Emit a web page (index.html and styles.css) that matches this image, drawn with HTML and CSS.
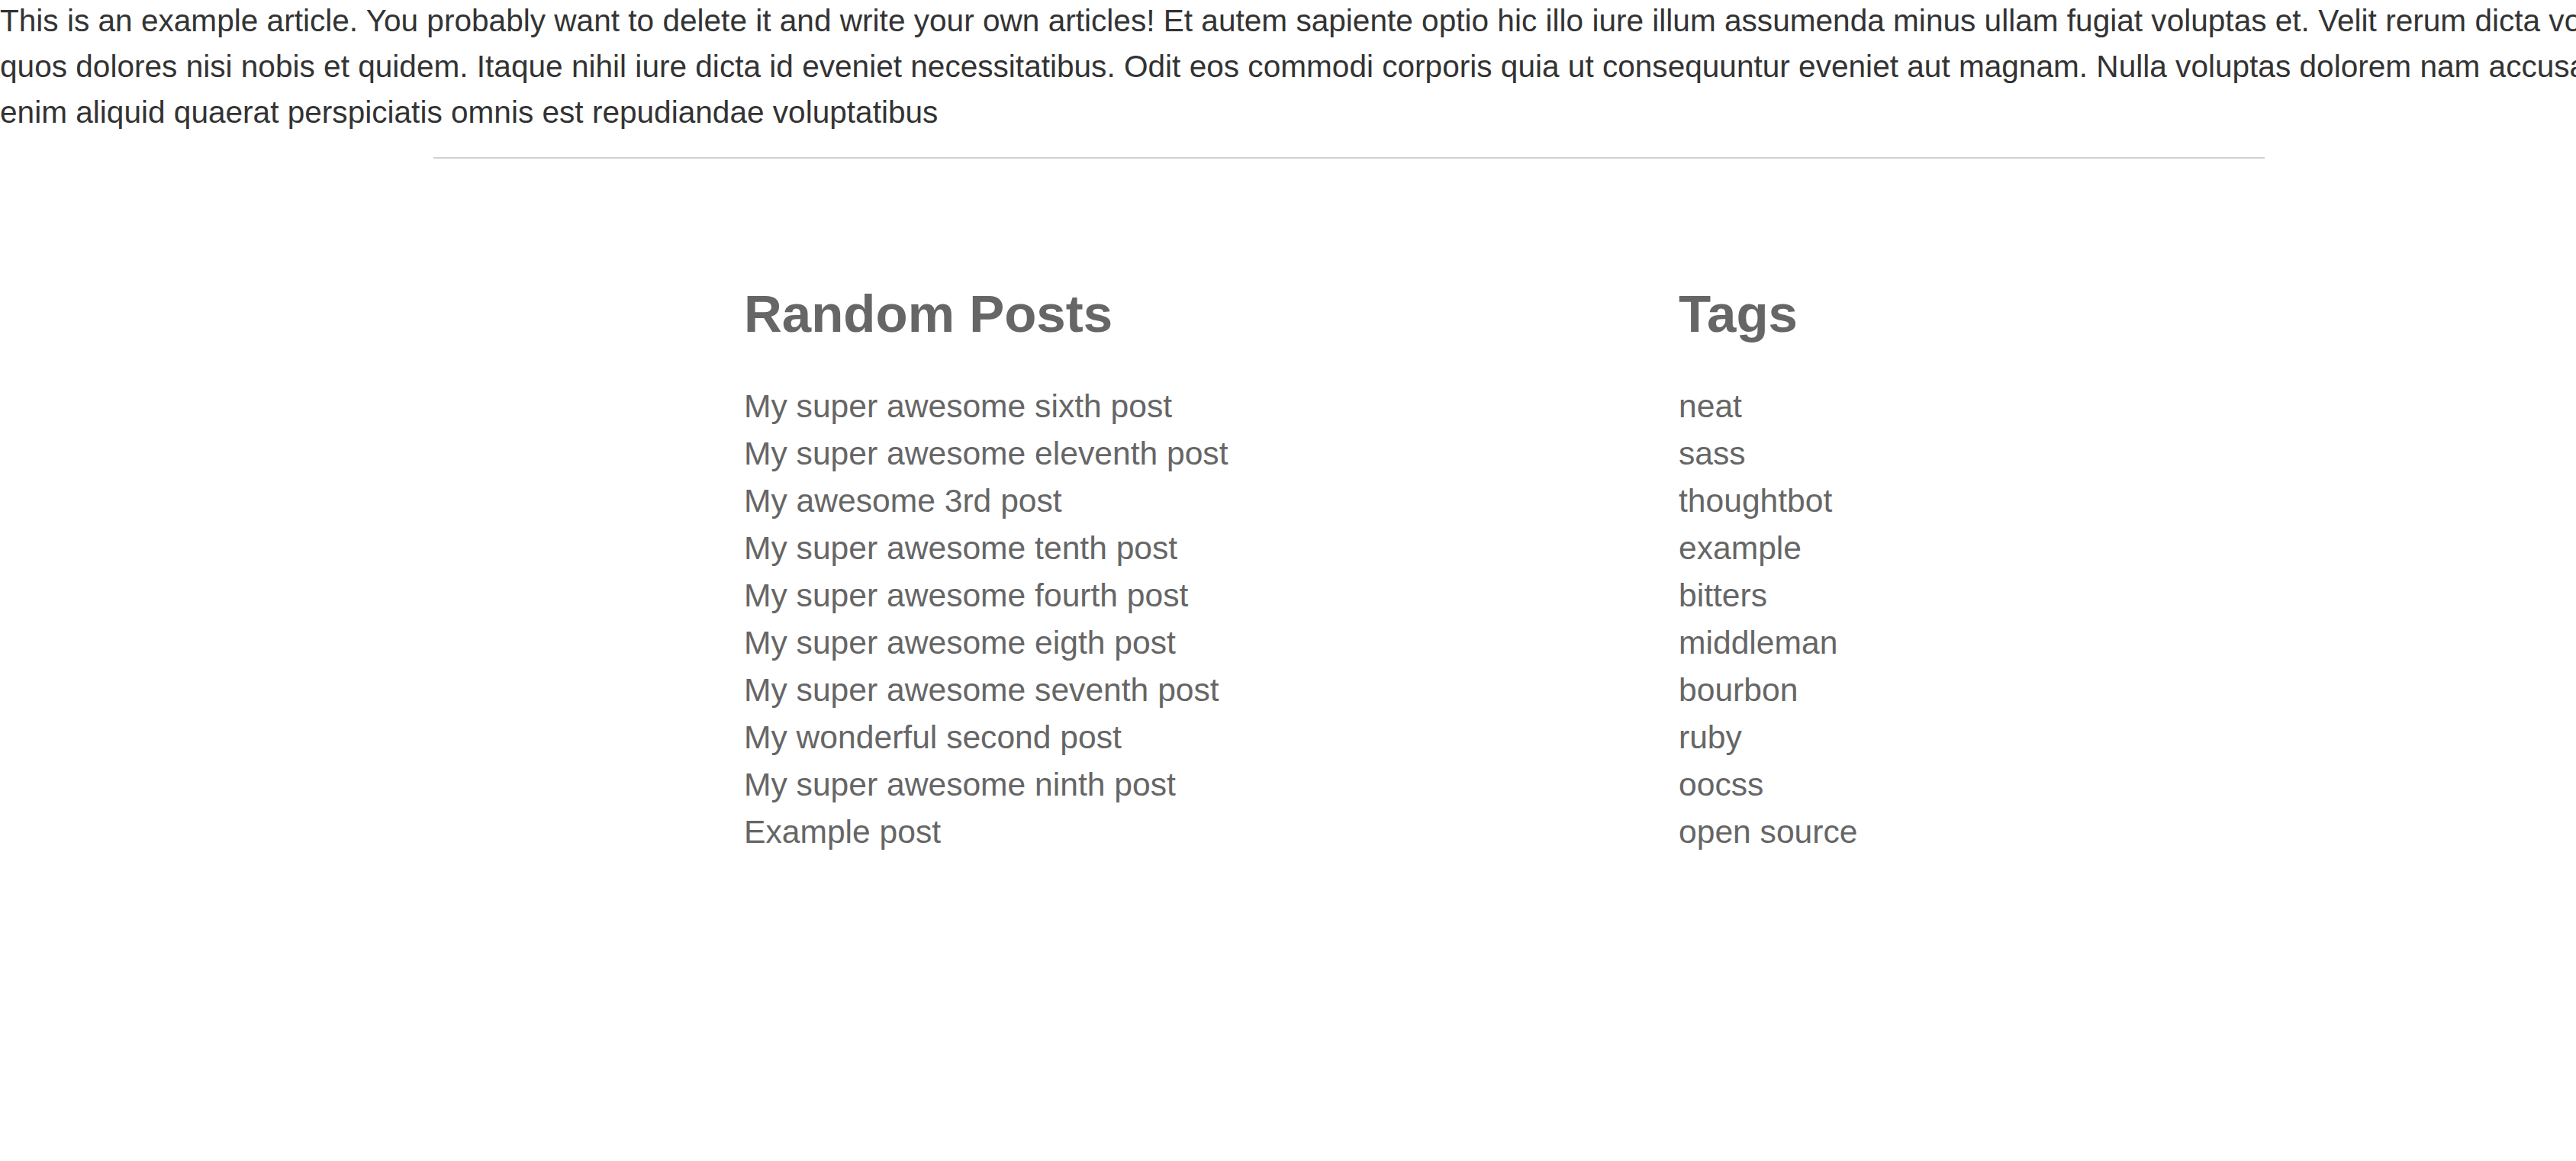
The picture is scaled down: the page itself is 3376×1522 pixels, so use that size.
FILE: index.html
```html
<!DOCTYPE html>
<html lang="en">
<head>
<meta charset="utf-8">
<title>Example article</title>
<link rel="stylesheet" href="styles.css">
</head>
<body>
<article class="article">
  <p class="article-body">This is an example article. You probably want to delete it and write your own articles! Et autem sapiente optio hic illo iure illum assumenda minus ullam fugiat voluptas et. Velit rerum dicta voluptatem<br>quos dolores nisi nobis et quidem. Itaque nihil iure dicta id eveniet necessitatibus. Odit eos commodi corporis quia ut consequuntur eveniet aut magnam. Nulla voluptas dolorem nam accusantium<br>enim aliquid quaerat perspiciatis omnis est repudiandae voluptatibus</p>
</article>
<div class="footer-wrap">
  <hr class="divider">
  <section class="sidebar">
    <div class="col">
      <h2 class="col-title">Random Posts</h2>
      <ul class="link-list">
        <li><a href="#">My super awesome sixth post</a></li>
        <li><a href="#">My super awesome eleventh post</a></li>
        <li><a href="#">My awesome 3rd post</a></li>
        <li><a href="#">My super awesome tenth post</a></li>
        <li><a href="#">My super awesome fourth post</a></li>
        <li><a href="#">My super awesome eigth post</a></li>
        <li><a href="#">My super awesome seventh post</a></li>
        <li><a href="#">My wonderful second post</a></li>
        <li><a href="#">My super awesome ninth post</a></li>
        <li><a href="#">Example post</a></li>
      </ul>
    </div>
    <div class="col">
      <h2 class="col-title">Tags</h2>
      <ul class="link-list">
        <li><a href="#">neat</a></li>
        <li><a href="#">sass</a></li>
        <li><a href="#">thoughtbot</a></li>
        <li><a href="#">example</a></li>
        <li><a href="#">bitters</a></li>
        <li><a href="#">middleman</a></li>
        <li><a href="#">bourbon</a></li>
        <li><a href="#">ruby</a></li>
        <li><a href="#">oocss</a></li>
        <li><a href="#">open source</a></li>
      </ul>
    </div>
  </section>
</div>
</body>
</html>
```
FILE: styles.css
```css
html {
  overflow: hidden;
}

body {
  margin: 0;
  background: #fff;
  font-family: "Liberation Sans", Arial, Helvetica, sans-serif;
  color: #333;
}

.article-body {
  margin: -3px 0 0;
  font-size: 40.6px;
  line-height: 60px;
  color: #333;
  white-space: nowrap;
}

.footer-wrap {
  width: 2400px;
  margin-left: 568px;
}

.divider {
  height: 0;
  margin: 29px 0 0;
  border: 0;
  border-top: 2px solid #d2d2d2;
}

.sidebar {
  display: grid;
  grid-template-columns: 1225px 1fr;
  padding-left: 407px;
  margin-top: 161px;
}

.col-title {
  margin: 0 0 47px;
  font-size: 69px;
  line-height: 85px;
  font-weight: bold;
  color: #666;
}

.link-list {
  list-style: none;
  margin: 0;
  padding: 0;
  font-size: 42.6px;
  line-height: 62px;
}

.link-list a {
  color: #666;
  text-decoration: none;
}
```
